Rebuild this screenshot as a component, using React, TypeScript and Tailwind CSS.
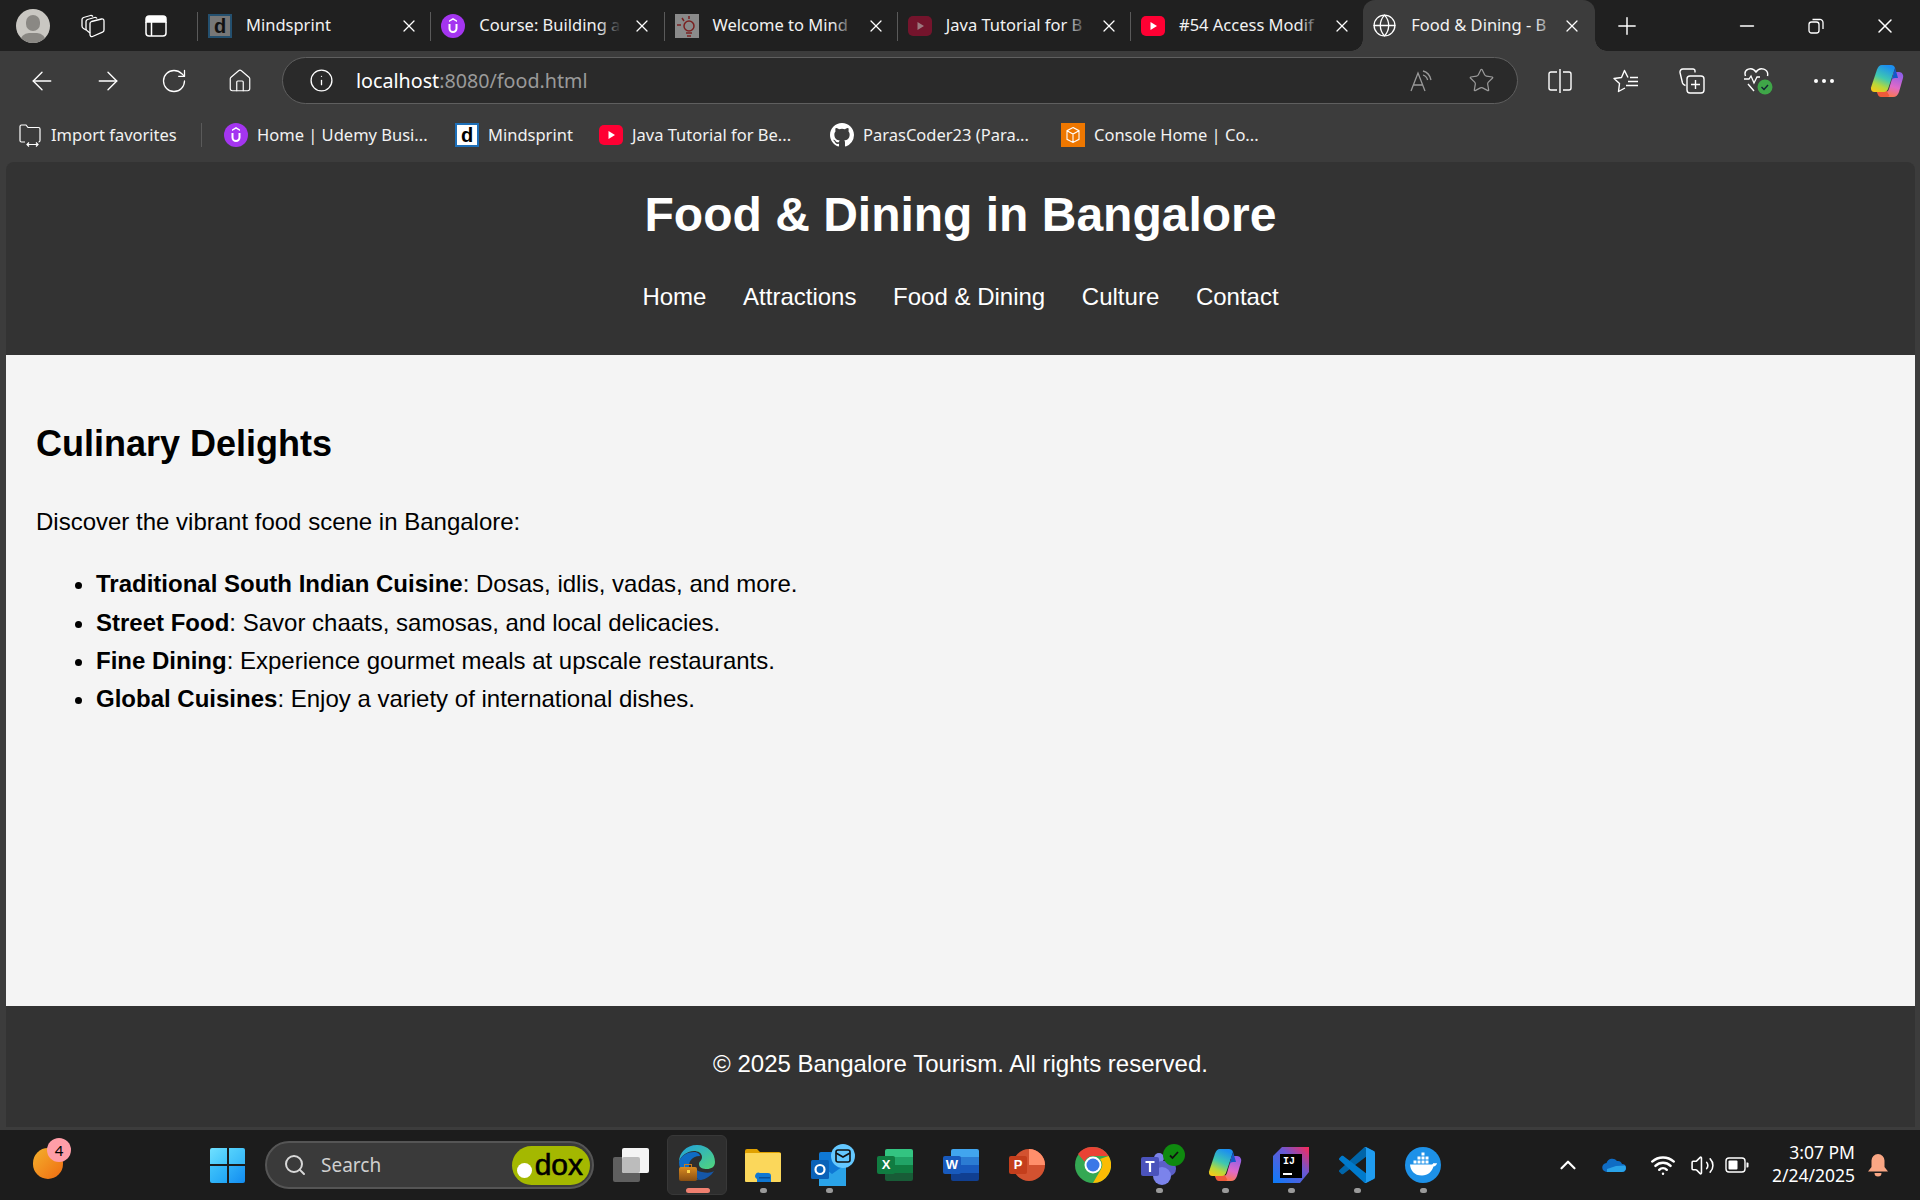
import { ArrowLeft, ArrowRight, ChevronUp, Globe, Home, Info, Minus, Plus, RotateCw, Search, Star, Volume2, Wifi, X } from "lucide-react";
import type { ReactNode } from "react";

const DLogo = () => (
  <div className="w-6 h-6 bg-[#1d6fb8] p-[2px] flex items-center justify-center">
    <div className="w-full h-full bg-white flex items-center justify-center text-[20px] leading-none font-bold text-black font-['Liberation_Sans',sans-serif]">d</div>
  </div>
);

const DLogoDim = () => (
  <div className="w-6 h-6 bg-[#24506f] p-[2px] flex items-center justify-center">
    <div className="w-full h-full bg-[#777] flex items-center justify-center text-[20px] leading-none font-bold text-[#111] font-['Liberation_Sans',sans-serif]">d</div>
  </div>
);

const Udemy = () => (
  <svg width="24" height="24" viewBox="0 0 24 24">
    <circle cx="12" cy="12" r="12" fill="#a435f0" />
    <path d="M12 4l4 2.4v1.6l-4-2.3L8 8V6.4z" fill="#fff" />
    <path d="M8.5 10v4.5a3.5 3.5 0 0 0 7 0V10" fill="none" stroke="#fff" strokeWidth="2" />
  </svg>
);

const MindLogo = () => (
  <svg width="24" height="24" viewBox="0 0 24 24">
    <rect width="24" height="24" fill="#8a8a8a" />
    <circle cx="14" cy="12" r="5" fill="none" stroke="#7a2020" strokeWidth="1.5" />
    <path d="M2 11h4M7 4l2 3M14 2v3M11 19h6M12 22h4" stroke="#7a2020" strokeWidth="1.5" />
  </svg>
);

const YouTube = ({ dim = false }: { dim?: boolean }) => (
  <svg width="24" height="24" viewBox="0 0 24 24">
    <rect y="2" width="24" height="20" rx="5" fill={dim ? "#74142c" : "#ff0033"} />
    <path d="M9.5 8l6.5 4-6.5 4z" fill={dim ? "#9c7a80" : "#fff"} />
  </svg>
);

const GitHub = () => (
  <svg width="24" height="24" viewBox="0 0 16 16" fill="#fff">
    <path d="M8 0C3.58 0 0 3.58 0 8c0 3.54 2.29 6.53 5.47 7.59.4.07.55-.17.55-.38v-1.34c-2.23.48-2.7-1.07-2.7-1.07-.36-.92-.89-1.17-.89-1.17-.73-.5.05-.49.05-.49.8.06 1.23.82 1.23.82.71 1.22 1.87.87 2.33.66.07-.52.28-.87.5-1.07-1.78-.2-3.64-.89-3.64-3.95 0-.87.31-1.59.82-2.15-.08-.2-.36-1.02.08-2.12 0 0 .67-.21 2.2.82a7.6 7.6 0 0 1 4 0c1.53-1.04 2.2-.82 2.2-.82.44 1.1.16 1.92.08 2.12.51.56.82 1.27.82 2.15 0 3.07-1.87 3.75-3.65 3.95.29.25.54.73.54 1.48v2.2c0 .21.15.46.55.38A8 8 0 0 0 16 8c0-4.42-3.58-8-8-8z" />
  </svg>
);

const AwsBox = () => (
  <svg width="24" height="24" viewBox="0 0 24 24">
    <rect width="24" height="24" fill="#ee7700" />
    <path d="M12 4.5l6 3.2v8.6l-6 3.2-6-3.2V7.7zM6 7.7l6 3.3 6-3.3M12 11v8.5" fill="none" stroke="#fff" strokeWidth="1.1" />
  </svg>
);

const ImportFav = () => (
  <svg width="24" height="24" viewBox="0 0 24 24" fill="none" stroke="#fff" strokeWidth="1.2">
    <path d="M7 19H3.5A1.5 1.5 0 0 1 2 17.5v-14A1.5 1.5 0 0 1 3.5 2H8l2 2.500h10.500A1.500 1.500 0 0 1 22 6v11.500a1.500 1.500 0 0 1-1.500 1.500" />
    <path d="M9 21.500h11M11 19.500l-2 2 2 2M18 19.500l2 2-2 2" />
  </svg>
);

const Workspaces = () => (
  <svg width="24" height="26" viewBox="0 0 24 26" fill="none" stroke="#fff" strokeWidth="1.3" strokeLinejoin="round">
    <path d="M5 17L2.500 15.500C1.500 15 1 14 1 13V6.500C1 5.500 1.500 5 2.500 4.500L9.500 2.500C10.500 2.200 11 2.500 12 3.500" />
    <path d="M9 20L6.500 18C5.500 17.500 5 16.500 5 15.500V8.500C5 7.500 5.500 7 6.500 6.500L13.500 4.500C14.500 4.200 15.500 4.500 16 5.500" />
    <path d="M9 10.500C9 9.500 9.500 8.800 10.500 8.500L20.500 6C22 5.700 23 6.500 23 8V17C23 18 22.500 18.800 21.500 19.200L11.500 23.500C10 24 9 23 9 21.500z" />
  </svg>
);

const VerticalTabs = () => (
  <svg width="22" height="22" viewBox="0 0 22 22" fill="none" stroke="#fff" strokeWidth="1.5">
    <path d="M1 7V4a3 3 0 0 1 3-3h14a3 3 0 0 1 3 3v3z" fill="#fff" />
    <path d="M1 7v11a3 3 0 0 0 3 3h14a3 3 0 0 0 3-3V7M6.500 7v14" />
  </svg>
);

const ReadAloud = () => (
  <svg width="24" height="24" viewBox="0 0 24 24" fill="none" stroke="#9a9a9a" strokeWidth="1.3">
    <path d="M1 22L8 4l7 18M3.500 16h9" />
    <path d="M13 2c4 1 7 4 8 9M13 6c2 .6 4 2.400 4.600 5" />
  </svg>
);

const SplitIcon = () => (
  <svg width="24" height="26" viewBox="0 0 24 26" fill="none" stroke="#fff" strokeWidth="1.4">
    <path d="M12 1v24M9 4H3a2 2 0 0 0-2 2v14a2 2 0 0 0 2 2h6M15 4h6a2 2 0 0 1 2 2v14a2 2 0 0 1-2 2h-6" />
  </svg>
);

const FavoritesIcon = () => (
  <svg width="26" height="24" viewBox="0 0 26 24" fill="none" stroke="#fff" strokeWidth="1.4" strokeLinejoin="round">
    <path d="M15 8.500L11.500 1.500 8.500 8.500 1 9.500l5.500 5-1 8 6.500-3.500" />
    <path d="M17 8.500h8M15 12.500h10M13 16.500h12" />
  </svg>
);

const CollectionsIcon = () => (
  <svg width="26" height="26" viewBox="0 0 26 26" fill="none" stroke="#fff" strokeWidth="1.4">
    <path d="M16 4.500V3a2 2 0 0 0-2-2H4a3 3 0 0 0-3 3.500L3.500 15c.5 1.500 1.500 2 3 2.500" />
    <rect x="8" y="8" width="17" height="17" rx="3" />
    <path d="M16.500 12v9M12 16.500h9" />
  </svg>
);

const HeartCheck = () => (
  <svg width="30" height="28" viewBox="0 0 30 28">
    <path d="M2.500 9C0 2 9-1 13 5c4-6 13-3 11.500 4M5 17l6 7" fill="none" stroke="#fff" strokeWidth="1.4" />
    <path d="M1 12h5l2-3 3 7 3-6h3" fill="none" stroke="#fff" strokeWidth="1.300" />
    <circle cx="22" cy="20" r="7.500" fill="#3fa648" />
    <path d="M18.500 20l2.500 2.500 4-4.500" fill="none" stroke="#123" strokeWidth="1.400" />
  </svg>
);

const Copilot = ({ size = 34 }: { size?: number }) => (
  <svg width={size} height={size} viewBox="0 0 34 34">
    <defs>
      <linearGradient id="copA" x1="0.6" y1="0" x2="0.2" y2="1">
        <stop offset="0" stopColor="#1c8ff0" />
        <stop offset="0.45" stopColor="#3fc8b0" />
        <stop offset="0.75" stopColor="#b8d83a" />
        <stop offset="1" stopColor="#f8c818" />
      </linearGradient>
      <linearGradient id="copB" x1="0.6" y1="0" x2="0.3" y2="1">
        <stop offset="0" stopColor="#8f5ee8" />
        <stop offset="0.55" stopColor="#e06ac8" />
        <stop offset="1" stopColor="#ff7a40" />
      </linearGradient>
    </defs>
    <path d="M24 8h5c3 0 5 3 4 6l-4 14c-1 3-3 5-6 5H13c-2 0-3.500-1-4-3l3-2h3c2 0 3.500-1 4-3z" fill="url(#copB)" />
    <path d="M11 33c-1.500 0-2.500-1-3-2l-2-5h10l3 5c.5 1-.5 2-2 2z" fill="#ef5a3a" />
    <path d="M12 1h9c2 0 3.500 1 4 3l-7 21c-.500 1.500-2 3-4 3H4.500C2 28 .500 26 1 23.500L7 5.500C8 3 9.500 1 12 1z" fill="url(#copA)" />
    <path d="M20 1c2.500 0 4.500 1 5.300 3.500L28 14h-3c-2 0-3 1-3.500 3L25 4c-.500-2-2.500-3-5-3z" fill="#1458c8" />
  </svg>
);

const FileExplorer = () => (
  <svg width="36" height="34" viewBox="0 0 36 34">
    <path d="M0 3a2 2 0 0 1 2-2h10l3 3h19a2 2 0 0 1 2 2v6H0z" fill="#e0a100" />
    <rect y="5" width="36" height="29" rx="1" fill="#fbd75b" />
    <path d="M12 31a3 3 0 0 1 3-6h8a3 3 0 0 1 3 3v6H12z" fill="#0f78d4" />
    <rect x="14" y="29" width="11" height="1.500" fill="#0a4f96" />
  </svg>
);

const Outlook = () => (
  <div className="relative w-[44px] h-[42px] ml-[7px]">
    <svg width="36" height="34" viewBox="0 0 36 34" className="absolute left-0 top-[8px]">
      <rect x="8" y="0" width="27" height="34" rx="2" fill="#0f78d4" />
      <path d="M8 12l13 10 14-10v22H8z" fill="#2aa3e8" />
      <rect y="8" width="18" height="19" rx="1.500" fill="#0a62b8" />
      <circle cx="9" cy="17.500" r="4.500" fill="none" stroke="#fff" strokeWidth="2.200" />
    </svg>
    <div className="absolute right-0 top-0 w-[24px] h-[24px] rounded-full bg-[#64c8ff] flex items-center justify-center">
      <svg width="16" height="14" viewBox="0 0 16 14" fill="none" stroke="#111" strokeWidth="1.600">
        <rect x="1" y="1" width="14" height="12" rx="2" />
        <path d="M1 4l7 4 7-4" />
      </svg>
    </div>
  </div>
);

const OfficeApp = ({ letter, tile, shades }: { letter: string; tile: string; shades: string[] }) => (
  <div className="relative w-[36px] h-[32px]">
    <div className="absolute right-0 top-0 w-[28px] h-[32px] rounded-[2px] overflow-hidden flex flex-col">
      {shades.map((shade) => (
        <div key={shade} className="flex-1" style={{ background: shade }} />
      ))}
    </div>
    <div
      className="absolute left-0 top-[7px] w-[18px] h-[18px] rounded-[2px] flex items-center justify-center text-[13px] font-bold text-white font-['Liberation_Sans',sans-serif]"
      style={{ background: tile }}
    >
      {letter}
    </div>
  </div>
);

const PowerPoint = () => (
  <div className="relative w-[36px] h-[32px]">
    <svg width="36" height="32" viewBox="0 0 36 32" className="absolute left-0 top-0">
      <circle cx="20" cy="16" r="16" fill="#d35230" />
      <path d="M20 0a16 16 0 0 1 16 16H20z" fill="#ff8f6b" />
    </svg>
    <div className="absolute left-0 top-[7px] w-[18px] h-[18px] rounded-[2px] bg-[#c43e1c] flex items-center justify-center text-[13px] font-bold text-white font-['Liberation_Sans',sans-serif]">P</div>
  </div>
);

const Chrome = () => (
  <svg width="36" height="36" viewBox="0 0 36 36">
    <circle cx="18" cy="18" r="18" fill="#34a853" />
    <path d="M18 0a18 18 0 0 1 15.600 9H18a9 9 0 0 0-8.400 5.700L3 7a18 18 0 0 1 15-7z" fill="#ea4335" />
    <path d="M33.600 9A18 18 0 0 1 18 36l7.800-13.500A9 9 0 0 0 25 12z" fill="#fbbc04" />
    <circle cx="18" cy="18" r="8.500" fill="#fff" />
    <circle cx="18" cy="18" r="6.500" fill="#3b78e7" />
  </svg>
);

const Teams = () => (
  <div className="relative w-[44px] h-[42px] ml-[7px]">
    <svg width="36" height="34" viewBox="0 0 36 34" className="absolute left-0 top-[8px]">
      <circle cx="18" cy="6" r="5" fill="#7b83eb" />
      <rect x="14" y="9" width="21" height="15" rx="7" fill="#5b5fc7" />
      <circle cx="21" cy="24" r="9" fill="#7b83eb" />
      <rect y="5" width="18" height="19" rx="2" fill="#4b53bc" />
      <path d="M4.500 10h9M9 10v10" stroke="#fff" strokeWidth="2.200" />
    </svg>
    <div className="absolute right-0 top-0 w-[22px] h-[22px] rounded-full bg-[#0f8a0f] flex items-center justify-center">
      <svg width="12" height="12" viewBox="0 0 12 12" fill="none" stroke="#111" strokeWidth="1.800">
        <path d="M2 6.500l2.500 2.500 5.500-6" />
      </svg>
    </div>
  </div>
);

const IntelliJ = () => (
  <div className="relative w-[36px] h-[36px]">
    <svg width="36" height="36" viewBox="0 0 36 36" className="absolute inset-0">
      <defs>
        <linearGradient id="ijA" x1="0" y1="1" x2="1" y2="0">
          <stop offset="0" stopColor="#087cfa" />
          <stop offset="0.6" stopColor="#6b57d2" />
          <stop offset="1" stopColor="#fe2857" />
        </linearGradient>
      </defs>
      <path d="M9 0h27v25L27 36H0V9z" fill="url(#ijA)" />
    </svg>
    <div className="absolute left-[7px] top-[7px] w-[22px] h-[24px] bg-black text-white text-[10px] font-bold leading-none pl-[3px] pt-[3px] font-['Liberation_Mono',monospace]">
      IJ
      <div className="mt-[6px] w-[9px] h-[2px] bg-white" />
    </div>
  </div>
);

const VSCode = () => (
  <svg width="36" height="36" viewBox="0 0 100 100">
    <path d="M96.460 10.800L75.860.9c-2.380-1.150-5.230-.66-7.100 1.210L1.300 63.600c-1.800 1.650-1.800 4.500 0 6.150l5.500 5c1.500 1.350 3.700 1.450 5.300.25L93.300 13.400c2.700-2.050 6.700-.1 6.700 3.300v-.25c0-2.400-1.350-4.650-3.540-5.650z" fill="#0065a9" />
    <path d="M96.460 89.200L75.860 99.100c-2.380 1.150-5.230.66-7.100-1.210L1.300 36.400c-1.800-1.650-1.800-4.500 0-6.150l5.500-5c1.500-1.350 3.700-1.450 5.300-.25L93.300 86.600c2.700 2.050 6.700.1 6.700-3.300v.25c0 2.400-1.350 4.650-3.540 5.650z" fill="#007acc" />
    <path d="M75.860 99.130c-2.380 1.150-5.230.66-7.100-1.200 2.300 2.300 6.240.67 6.240-2.600V4.670c0-3.270-3.940-4.900-6.240-2.600 1.870-1.870 4.720-2.360 7.100-1.200l20.600 9.900C98.600 11.800 100 14 100 16.400v67.200c0 2.400-1.400 4.600-3.540 5.630z" fill="#1f9cf0" />
  </svg>
);

const Docker = () => (
  <svg width="36" height="36" viewBox="0 0 36 36">
    <circle cx="18" cy="18" r="18" fill="#1d91e8" />
    <path d="M5 17.500h21c1 0 2-.500 2.500-1.500.8.300 2.500.500 3.500 0-.3 2-2 3.500-3.500 3.500-1.500 5-5.500 9-11.500 9-8 0-11.500-5-12-11z" fill="#fff" />
    <path d="M8.500 13.500h3v3h-3zM12.500 13.500h3v3h-3zM16.500 13.500h3v3h-3zM20.500 13.500h3v3h-3zM12.500 9.500h3v3h-3zM16.500 9.500h3v3h-3zM20.500 9.500h3v3h-3zM16.500 5.500h3v3h-3z" fill="#fff" />
  </svg>
);

const Edge = () => (
  <div className="relative w-[36px] h-[36px]">
    <svg width="36" height="36" viewBox="0 0 36 36" className="absolute inset-0">
      <defs>
        <linearGradient id="edgeA" x1="0" y1="0" x2="1" y2="1">
          <stop offset="0" stopColor="#1fa0e0" />
          <stop offset="1" stopColor="#52d67a" />
        </linearGradient>
      </defs>
      <path d="M18 0c11 0 18 8 18 17 0 5-4 7-8 7-4 0-8-1-8-5 0-3 3-3 3-7 0-4-4-6-8-6C9 6 2 10 0 17 0 8 7 0 18 0z" fill="url(#edgeA)" />
      <path d="M0 17c2-7 9-10 15-10 3 0 6 2 6 4-9 0-13 7-10 15 1 4 6 9 11 9C10 36 0 28 0 17z" fill="#0f6cc4" />
      <path d="M22 35c5-1 10-4 13-9-3 2-7 2-12 1-3 0-7-3-8-5-1 6 2 13 7 13z" fill="#1557a8" />
    </svg>
    <div className="absolute left-0 bottom-0 w-[18px] h-[14px] rounded-[2px] bg-gradient-to-b from-[#d98a20] to-[#8a4f12]">
      <div className="mx-auto -mt-[3px] w-[8px] h-[3px] border border-b-0 border-[#c77a1e]" />
      <div className="mx-auto mt-[3px] w-[3px] h-[3px] bg-[#ffd24a]" />
    </div>
  </div>
);

const WinLogo = () => (
  <div className="grid grid-cols-2 gap-[2px] w-[35px] h-[35px]">
    <div className="rounded-tl-[2px] bg-gradient-to-br from-[#6fe0ff] to-[#3fc4fa]" />
    <div className="rounded-tr-[2px] bg-gradient-to-br from-[#55d2fc] to-[#34b6f8]" />
    <div className="rounded-bl-[2px] bg-gradient-to-br from-[#3fc2fa] to-[#1fa4f5]" />
    <div className="rounded-br-[2px] bg-gradient-to-br from-[#2fb0f8] to-[#128cf0]" />
  </div>
);

const TaskView = () => (
  <div className="relative w-[36px] h-[34px]">
    <div className="absolute left-0 bottom-0 w-[27px] h-[25px] rounded-[2px] bg-[#5f5f5f]" />
    <div className="absolute right-0 top-0 w-[27px] h-[25px] rounded-[2px] bg-[#f4f4f4]" />
    <div className="absolute left-[9px] top-[9px] w-[18px] h-[16px] rounded-[2px] bg-[#bcbcbc]" />
  </div>
);

const TrayCloud = () => (
  <svg width="24" height="16" viewBox="0 0 24 16">
    <path d="M5 15a4.500 4.500 0 0 1-.500-9A6 6 0 0 1 15 4a4.500 4.500 0 0 1 5 3 4 4 0 0 1 0 8z" fill="#0f6cc4" />
    <path d="M5 15h15a4 4 0 0 0 3-6.500L14 9l-9 3z" fill="#2aa3e8" />
  </svg>
);

const Battery = () => (
  <svg width="24" height="16" viewBox="0 0 24 16" fill="none">
    <rect x="1" y="1" width="19" height="14" rx="3" stroke="#fff" strokeWidth="1.400" />
    <rect x="3.500" y="3.500" width="9" height="9" rx="1" fill="#fff" />
    <path d="M21.500 5.500h1a1 1 0 0 1 1 1v3a1 1 0 0 1-1 1h-1z" fill="#fff" />
  </svg>
);

const Bell = () => (
  <svg width="20" height="24" viewBox="0 0 20 24" fill="#f9a684">
    <path d="M10 1a6.500 6.500 0 0 1 6.500 6.500V14l3.500 4.500H0L3.500 14V7.500A6.500 6.500 0 0 1 10 1z" />
    <path d="M6.500 20h7a3.500 3.500 0 0 1-7 0z" />
  </svg>
);

const tabs: { title: string; icon: ReactNode }[] = [
  { title: "Mindsprint", icon: <DLogoDim /> },
  { title: "Course: Building a", icon: <Udemy /> },
  { title: "Welcome to Mind", icon: <MindLogo /> },
  { title: "Java Tutorial for B", icon: <YouTube dim /> },
  { title: "#54 Access Modif", icon: <YouTube /> },
];

const bookmarks: { title: string; icon: ReactNode; className: string }[] = [
  { title: "Home | Udemy Busi...", icon: <Udemy />, className: "w-[231px]" },
  { title: "Mindsprint", icon: <DLogo />, className: "w-[144px]" },
  { title: "Java Tutorial for Be...", icon: <YouTube />, className: "w-[231px]" },
  { title: "ParasCoder23 (Para...", icon: <GitHub />, className: "w-[231px]" },
  { title: "Console Home | Co...", icon: <AwsBox />, className: "w-[210px]" },
];

const pinned: { key: string; icon: ReactNode; open?: boolean }[] = [
  { key: "explorer", icon: <FileExplorer />, open: true },
  { key: "outlook", icon: <Outlook />, open: true },
  { key: "excel", icon: <OfficeApp letter="X" tile="#107c41" shades={["#33c481", "#21a366", "#107c41", "#185c37"]} /> },
  { key: "word", icon: <OfficeApp letter="W" tile="#185abd" shades={["#41a5ee", "#2b7cd3", "#185abd", "#103f91"]} /> },
  { key: "powerpoint", icon: <PowerPoint /> },
  { key: "chrome", icon: <Chrome /> },
  { key: "teams", icon: <Teams />, open: true },
  { key: "copilot", icon: <Copilot />, open: true },
  { key: "intellij", icon: <IntelliJ />, open: true },
  { key: "vscode", icon: <VSCode />, open: true },
  { key: "docker", icon: <Docker />, open: true },
];

const navLinks = ["Home", "Attractions", "Food & Dining", "Culture", "Contact"];

const ToolButton = ({ children }: { children: ReactNode }) => (
  <div className="w-[66px] h-full flex items-center justify-center">{children}</div>
);

export default function App() {
  return (
    <div className="h-screen w-full flex flex-col overflow-hidden bg-[#3c3c3c] font-['Liberation_Sans',sans-serif]">
      {/* tab strip */}
      <div className="h-[51px] shrink-0 flex bg-[#202020] text-[16.500px] text-[#f2f2f2] font-['Noto_Sans',sans-serif]">
        <div className="w-[197px] shrink-0 flex items-center">
          <div className="ml-[16px] w-[34px] h-[34px] rounded-full bg-[#c9c7c2] overflow-hidden relative">
            <div className="absolute left-[10px] top-[6px] w-[14px] h-[16px] rounded-full bg-[#8a8884]" />
            <div className="absolute left-[4px] top-[24px] w-[26px] h-[18px] rounded-full bg-[#8a8884]" />
          </div>
          <div className="ml-[31px]"><Workspaces /></div>
          <div className="ml-[40px]"><VerticalTabs /></div>
        </div>
        {tabs.map((tab) => (
          <div key={tab.title} className="w-[233.250px] shrink-0 flex items-center relative pl-[11px]">
            <div className="absolute left-0 top-[12px] h-[29px] w-px bg-[#5a5a5a]" />
            <div className="w-6 shrink-0 flex justify-center">{tab.icon}</div>
            <div className="ml-[14px] w-[142px] relative whitespace-nowrap">
              {tab.title}
              <div className="absolute right-0 top-0 bottom-0 w-[22px] bg-gradient-to-r from-transparent to-[#202020]" />
            </div>
            <X size={20} strokeWidth={1.5} className="ml-[11px] text-white shrink-0" />
          </div>
        ))}
        <div className="w-[232px] shrink-0 flex items-center relative pl-[9px] bg-[#3c3c3c] rounded-t-[12px]">
          <div className="absolute bottom-0 -left-[12px] w-[12px] h-[12px] bg-[radial-gradient(circle_at_0_0,#202020_11.5px,#3c3c3c_12px)]" />
          <div className="absolute bottom-0 -right-[12px] w-[12px] h-[12px] bg-[radial-gradient(circle_at_100%_0,#202020_11.5px,#3c3c3c_12px)]" />
          <Globe size={25} strokeWidth={1.25} className="text-white shrink-0" />
          <div className="ml-[14px] w-[146px] relative whitespace-nowrap">
            Food &amp; Dining - B
            <div className="absolute right-0 top-0 bottom-0 w-[22px] bg-gradient-to-r from-transparent to-[#3c3c3c]" />
          </div>
          <X size={20} strokeWidth={1.5} className="ml-[5px] text-white shrink-0" />
        </div>
        <div className="ml-[18px] w-[28px] flex items-center justify-center">
          <Plus size={28} strokeWidth={1.25} className="text-white" />
        </div>
        <div className="ml-auto flex items-center">
          <div className="w-[69px] flex justify-center"><Minus size={22} strokeWidth={1.75} className="text-white" /></div>
          <div className="w-[69px] flex justify-center">
            <svg width="16" height="16" viewBox="0 0 16 16" fill="none" stroke="#fff" strokeWidth="1.300">
              <rect x="1" y="4" width="10" height="11" rx="2.500" />
              <path d="M4.500 1.500h7A3 3 0 0 1 15 4.500V11" />
            </svg>
          </div>
          <div className="w-[69px] mr-[1px] flex justify-center"><X size={24} strokeWidth={1.5} className="text-white" /></div>
        </div>
      </div>

      {/* address bar */}
      <div className="h-[60px] shrink-0 flex items-center pl-[9px]">
        <div className="h-full flex -mt-[1px]">
          <ToolButton><ArrowLeft size={30} strokeWidth={1.1} className="text-white" /></ToolButton>
          <ToolButton><ArrowRight size={30} strokeWidth={1.1} className="text-white" /></ToolButton>
          <ToolButton><RotateCw size={28} strokeWidth={1.1} className="text-white" /></ToolButton>
          <ToolButton><Home size={26} strokeWidth={1.1} className="text-white" /></ToolButton>
        </div>
        <div className="ml-[9px] w-[1236px] h-[47px] -mt-[1px] rounded-full border border-[#5f5f5f] bg-[#2a2a2a] flex items-center pl-[26px] pr-[22px]">
          <Info size={25} strokeWidth={1.25} className="text-white shrink-0" />
          <div className="ml-[22px] mt-[1px] text-[19.700px] text-white font-['Noto_Sans',sans-serif]">
            localhost<span className="text-[#9a9a9a]">:8080/food.html</span>
          </div>
          <div className="ml-auto"><ReadAloud /></div>
          <Star size={27} strokeWidth={1.1} className="ml-[34px] text-[#9a9a9a]" />
        </div>
        <div className="ml-[9px] h-full flex -mt-[1px]">
          <ToolButton><SplitIcon /></ToolButton>
          <ToolButton><FavoritesIcon /></ToolButton>
          <ToolButton><CollectionsIcon /></ToolButton>
          <ToolButton><HeartCheck /></ToolButton>
          <ToolButton>
            <div className="flex gap-[4px]">
              <div className="w-[4px] h-[4px] rounded-full bg-white" />
              <div className="w-[4px] h-[4px] rounded-full bg-white" />
              <div className="w-[4px] h-[4px] rounded-full bg-white" />
            </div>
          </ToolButton>
          <div className="w-[60px] h-full flex items-center justify-center"><Copilot /></div>
        </div>
      </div>

      {/* favorites bar */}
      <div className="h-[51px] shrink-0 flex items-center pl-[18px] pb-[3px] text-[16.500px] text-[#f2f2f2] font-['Noto_Sans',sans-serif]">
        <div className="w-[183px] shrink-0 flex items-center gap-[9px]">
          <ImportFav />
          <span>Import favorites</span>
        </div>
        <div className="w-px h-[24px] bg-[#5a5a5a] mr-[22px]" />
        {bookmarks.map((item) => (
          <div key={item.title} className={`${item.className} shrink-0 flex items-center gap-[9px] whitespace-nowrap`}>
            {item.icon}
            <span>{item.title}</span>
          </div>
        ))}
      </div>

      {/* page */}
      <div className="flex-1 min-h-0 flex flex-col ml-[6px] mr-[5px] rounded-t-[8px] overflow-hidden">
        <header className="shrink-0 bg-[#333] text-white text-center pt-[15px] pb-[39px]">
          <h1 className="text-[48px] leading-[76.8px] font-bold">Food &amp; Dining in Bangalore</h1>
          <nav className="mt-[24px] flex justify-center gap-[36.67px] text-[24px] leading-[38.4px]">
            {navLinks.map((link) => (
              <a key={link}>{link}</a>
            ))}
          </nav>
        </header>
        <main className="flex-1 bg-[#f4f4f4] text-black px-[30px] pt-[60px] text-[24px] leading-[38.4px]">
          <h2 className="text-[36px] leading-[57.6px] font-bold">Culinary Delights</h2>
          <p className="mt-[30px]">Discover the vibrant food scene in Bangalore:</p>
          <ul className="mt-[24px] list-disc pl-[60px]">
            <li><strong>Traditional South Indian Cuisine</strong>: Dosas, idlis, vadas, and more.</li>
            <li><strong>Street Food</strong>: Savor chaats, samosas, and local delicacies.</li>
            <li><strong>Fine Dining</strong>: Experience gourmet meals at upscale restaurants.</li>
            <li><strong>Global Cuisines</strong>: Enjoy a variety of international dishes.</li>
          </ul>
        </main>
        <footer className="shrink-0 bg-[#333] text-white text-center text-[24px] leading-[38.4px] pt-[39px] pb-[44px]">
          © 2025 Bangalore Tourism. All rights reserved.
        </footer>
      </div>

      {/* taskbar */}
      <div className="h-[70px] mt-[3px] shrink-0 flex items-center bg-[#1c1c1c] text-white font-['Noto_Sans',sans-serif]">
        <div className="relative w-[210px] shrink-0 h-full">
          <div className="absolute left-[33px] top-[18px] w-[30px] h-[31px] rounded-full bg-gradient-to-br from-[#f3b02c] to-[#ee6a10]" />
          <div className="absolute left-[47px] top-[8px] w-[24px] h-[24px] rounded-full bg-[#ff9ea8] text-black text-[15px] flex items-center justify-center">4</div>
        </div>
        <WinLogo />
        <div className="ml-[20px] w-[329px] h-[48px] rounded-full border-2 border-[#555] bg-[#3a3a3a] flex items-center pl-[16px] pr-[2px] shrink-0">
          <Search size={24} strokeWidth={2} className="text-[#d8d8d8]" />
          <span className="ml-[14px] text-[19px] text-[#cfcfcf]">Search</span>
          <div className="ml-auto w-[78px] h-[39px] rounded-full bg-[#a4b800] flex items-center justify-end pr-[7px] text-[30px] leading-none text-black [-webkit-text-stroke:0.6px_black] font-['Liberation_Sans',sans-serif]">
            <div className="w-[15px] h-[15px] rounded-full bg-white mr-[3px] mt-[10px]" />
            dox
          </div>
        </div>
        <div className="ml-[19px]"><TaskView /></div>
        <div className="ml-[18px] w-[60px] h-[60px] rounded-[6px] bg-[#2e2e2e] border border-[#383838] relative flex items-center justify-center pb-[5px] shrink-0">
          <Edge />
          <div className="absolute left-[18px] bottom-[1px] w-[24px] h-[5px] rounded-full bg-[#f08070]" />
        </div>
        <div className="ml-[3px] flex h-full">
          {pinned.map((app) => (
            <div key={app.key} className="w-[66px] h-full relative flex items-center justify-center">
              {app.icon}
              {app.open && <div className="absolute left-[30px] bottom-[7px] w-[7px] h-[5px] rounded-full bg-[#9a9a9a]" />}
            </div>
          ))}
        </div>
        <div className="ml-auto flex items-center h-full pr-[32px]">
          <ChevronUp size={26} strokeWidth={2} className="text-white" />
          <div className="ml-[21px]"><TrayCloud /></div>
          <Wifi size={26} strokeWidth={2.25} className="ml-[24px] text-white" />
          <Volume2 size={25} strokeWidth={1.5} className="ml-[14px] text-white" />
          <div className="ml-[10px]"><Battery /></div>
          <div className="ml-[23px] -mt-[3px] text-right text-[17.500px] leading-[23px] whitespace-nowrap">
            <div>3:07 PM</div>
            <div>2/24/2025</div>
          </div>
          <div className="ml-[13px]"><Bell /></div>
        </div>
      </div>
    </div>
  );
}
